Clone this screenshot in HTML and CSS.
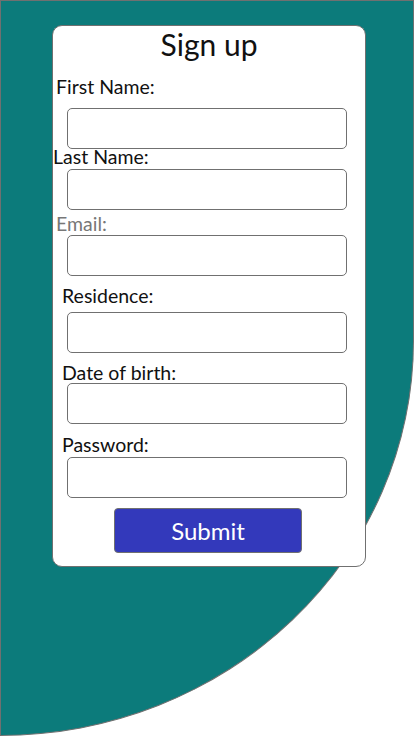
FILE: index.html
```html
<!DOCTYPE html>
<html lang="en">
<head>
<meta charset="utf-8">
<title>Sign up</title>
<link rel="stylesheet" href="styles.css">
</head>
<body>
<div class="backdrop">
  <form class="card">
    <h1 class="title">Sign up</h1>
    <label class="lbl l1" for="fn">First Name:</label>
    <input class="field i1" id="fn" type="text">
    <label class="lbl l2" for="ln">Last Name:</label>
    <input class="field i2" id="ln" type="text">
    <label class="lbl l3 muted" for="em">Email:</label>
    <input class="field i3" id="em" type="text">
    <label class="lbl l4" for="rs">Residence:</label>
    <input class="field i4" id="rs" type="text">
    <label class="lbl l5" for="db">Date of birth:</label>
    <input class="field i5" id="db" type="text">
    <label class="lbl l6" for="pw">Password:</label>
    <input class="field i6" id="pw" type="password">
    <button class="submit" type="button">Submit</button>
  </form>
</div>
</body>
</html>
```
FILE: styles.css
```css
* { box-sizing: border-box; }
html, body { margin: 0; padding: 0; background: #ffffff; }
body { font-family: Lato, "Liberation Sans", sans-serif; color: #111; }

.backdrop {
  width: 414px;
  height: 736px;
  background: #0c7b7b;
  border: 1px solid #707070;
  border-bottom-right-radius: 414px 395px;
  padding: 24px 0 0 51px;
}

.card {
  width: 314px;
  background: #ffffff;
  border: 1px solid #707070;
  border-radius: 10px;
  padding: 0 0 14px 0;
  display: flex;
  flex-direction: column;
  align-items: flex-start;
}

.title {
  align-self: stretch;
  margin: 0;
  text-align: center;
  font-weight: 400;
  font-size: 30px;
  line-height: 36px;
  color: #111;
}

.lbl {
  display: block;
  font-size: 19.5px;
  line-height: 20px;
  color: #111;
}
.muted { color: #777; }

.l1 { margin: 15px 0 0 3px; }
.l2 { margin: -2px 0 0 0; }
.l3 { margin: 4px 0 0 3px; }
.l4 { margin: 10px 0 0 9px; }
.l5 { margin: 10px 0 0 9px; }
.l6 { margin: 11px 0 0 9px; }

.field {
  display: block;
  width: 280px;
  height: 41px;
  margin-left: 14px;
  border: 1px solid #707070;
  border-radius: 5px;
  background: #fff;
  font: inherit;
}
.i1 { margin-top: 11px; }
.i2 { margin-top: 2px; }
.i3 { margin-top: 1px; }
.i4 { margin-top: 6px; }
.i5 { margin-top: 0; }
.i6 { margin-top: 2px; }

.submit {
  margin: 10px 0 0 61px;
  width: 188px;
  height: 45px;
  background: #3339bb;
  color: #fff;
  border: 1px solid #707070;
  border-radius: 4px;
  font-family: Lato, "Liberation Sans", sans-serif;
  font-size: 24px;
  line-height: 1;
}
.card { padding-bottom: 13px; }
```
